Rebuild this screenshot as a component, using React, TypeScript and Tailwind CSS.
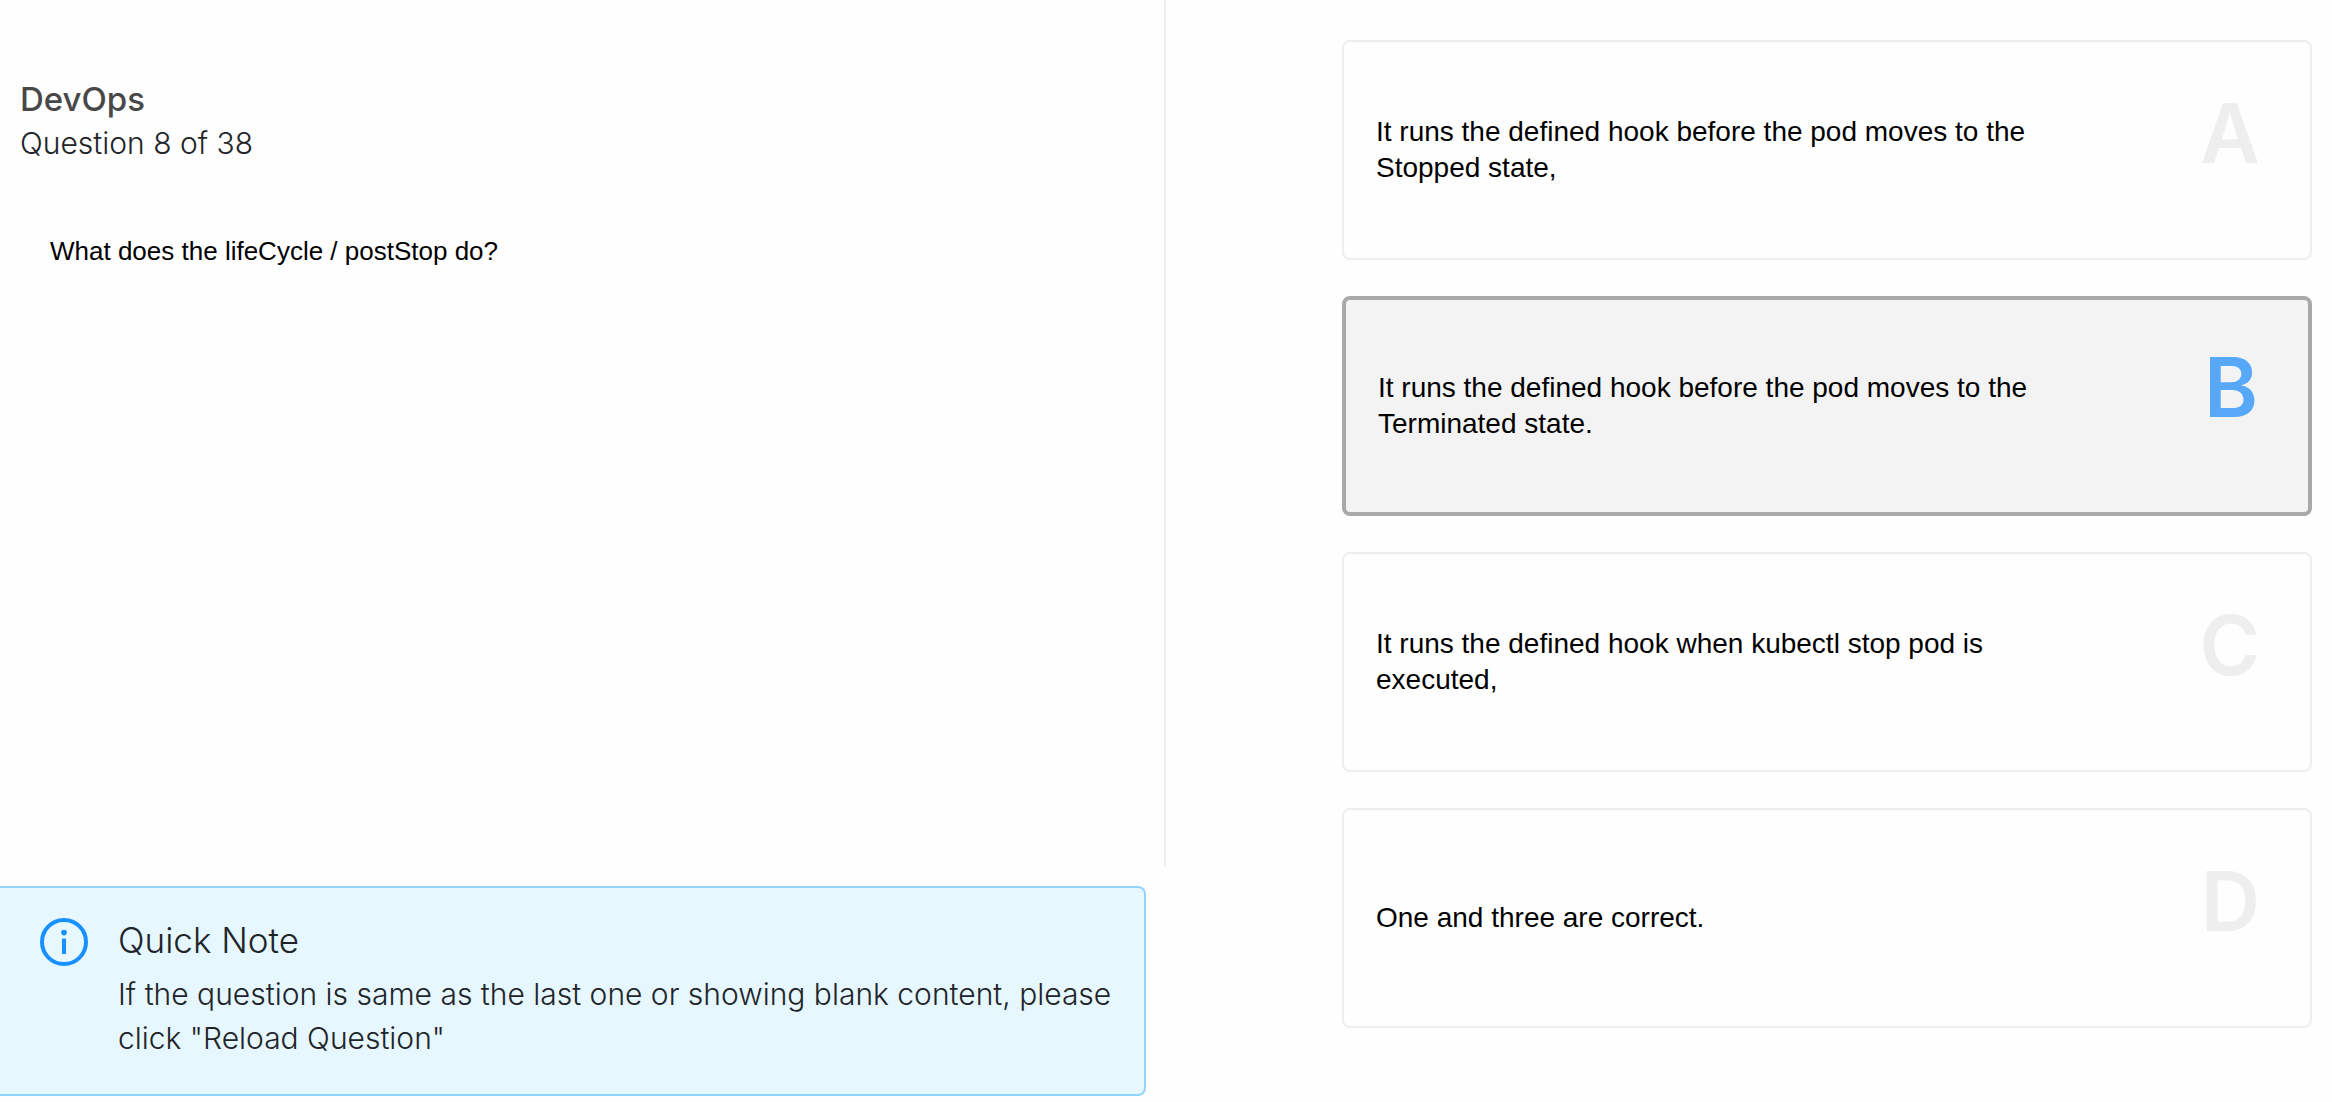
import { useState } from "react";

const options = [
  { key: "A", text: "It runs the defined hook before the pod moves to the Stopped state," },
  { key: "B", text: "It runs the defined hook before the pod moves to the Terminated state." },
  { key: "C", text: "It runs the defined hook when kubectl stop pod is executed," },
  { key: "D", text: "One and three are correct." },
];

function InfoIcon() {
  return (
    <svg viewBox="0 0 48 48" className="mt-0.5 size-12 shrink-0" fill="none" aria-hidden="true">
      <circle cx="24" cy="24" r="22" stroke="#1890ff" strokeWidth="4" />
      <circle cx="24" cy="14.6" r="2.8" fill="#1890ff" />
      <rect x="22" y="20.6" width="4" height="15.4" rx="0.5" fill="#1890ff" />
    </svg>
  );
}

function Option({
  letter,
  text,
  checked,
  onSelect,
}: {
  letter: string;
  text: string;
  checked: boolean;
  onSelect: () => void;
}) {
  return (
    <label
      className={
        checked
          ? "relative flex min-h-[220px] cursor-pointer justify-between rounded-lg border-4 border-[#a9a9a9] bg-[#f3f3f3] pr-[50px] pl-8"
          : "relative flex min-h-[220px] cursor-pointer justify-between rounded-lg border-2 border-[#eeeeee] pr-[50px] pl-8"
      }
    >
      <input type="radio" name="answer" value={letter} checked={checked} onChange={onSelect} className="sr-only" />
      <span className="max-w-3/4 self-center text-[28px] leading-9 text-black">{text}</span>
      <span
        className={
          checked
            ? "pt-[50px] font-['Inter',sans-serif] text-[82px] leading-[76px] font-semibold text-[#57a8f8]"
            : "pt-[50px] font-['Inter',sans-serif] text-[82px] leading-[84px] font-semibold text-[#eeeeee]"
        }
      >
        {letter}
      </span>
    </label>
  );
}

export default function App() {
  const [answer, setAnswer] = useState("B");

  return (
    <div className="flex min-h-screen bg-[#fefefe] font-['Liberation_Sans',Arial,sans-serif]">
      <main className="flex w-1/2 flex-col pb-1.5">
        <section className="flex-1 border-r-2 border-[#eeeeee] px-5 pt-[77px]">
          <h1 className="font-['Inter',sans-serif] text-[33px] leading-[44px] font-medium text-[#484848]">DevOps</h1>
          <p className="font-['Inter',sans-serif] text-[30px] leading-[44px] font-light text-[#212529]">
            Question 8 of 38
          </p>
          <p id="question" className="mt-[68px] ml-[30px] text-[26px] leading-9 text-black">
            What does the lifeCycle / postStop do?
          </p>
        </section>
        <aside className="mt-5 mr-5 flex gap-[30px] rounded-r-lg border-2 border-l-0 border-[#91d5ff] bg-[#e6f7ff] pt-7 pr-5 pb-[34px] pl-10 font-['Inter',sans-serif] font-light text-[#212529]">
          <InfoIcon />
          <div>
            <h2 className="text-[35px] leading-[48px]">Quick Note</h2>
            <p className="mt-2 text-[30px] leading-[44px]">
              If the question is same as the last one or showing blank content, please click "Reload Question"
            </p>
          </div>
        </aside>
      </main>
      <div role="radiogroup" aria-labelledby="question" className="flex w-1/2 flex-col gap-9 pt-10 pr-5 pl-44">
        {options.map((o) => (
          <Option
            key={o.key}
            letter={o.key}
            text={o.text}
            checked={answer === o.key}
            onSelect={() => setAnswer(o.key)}
          />
        ))}
      </div>
    </div>
  );
}
